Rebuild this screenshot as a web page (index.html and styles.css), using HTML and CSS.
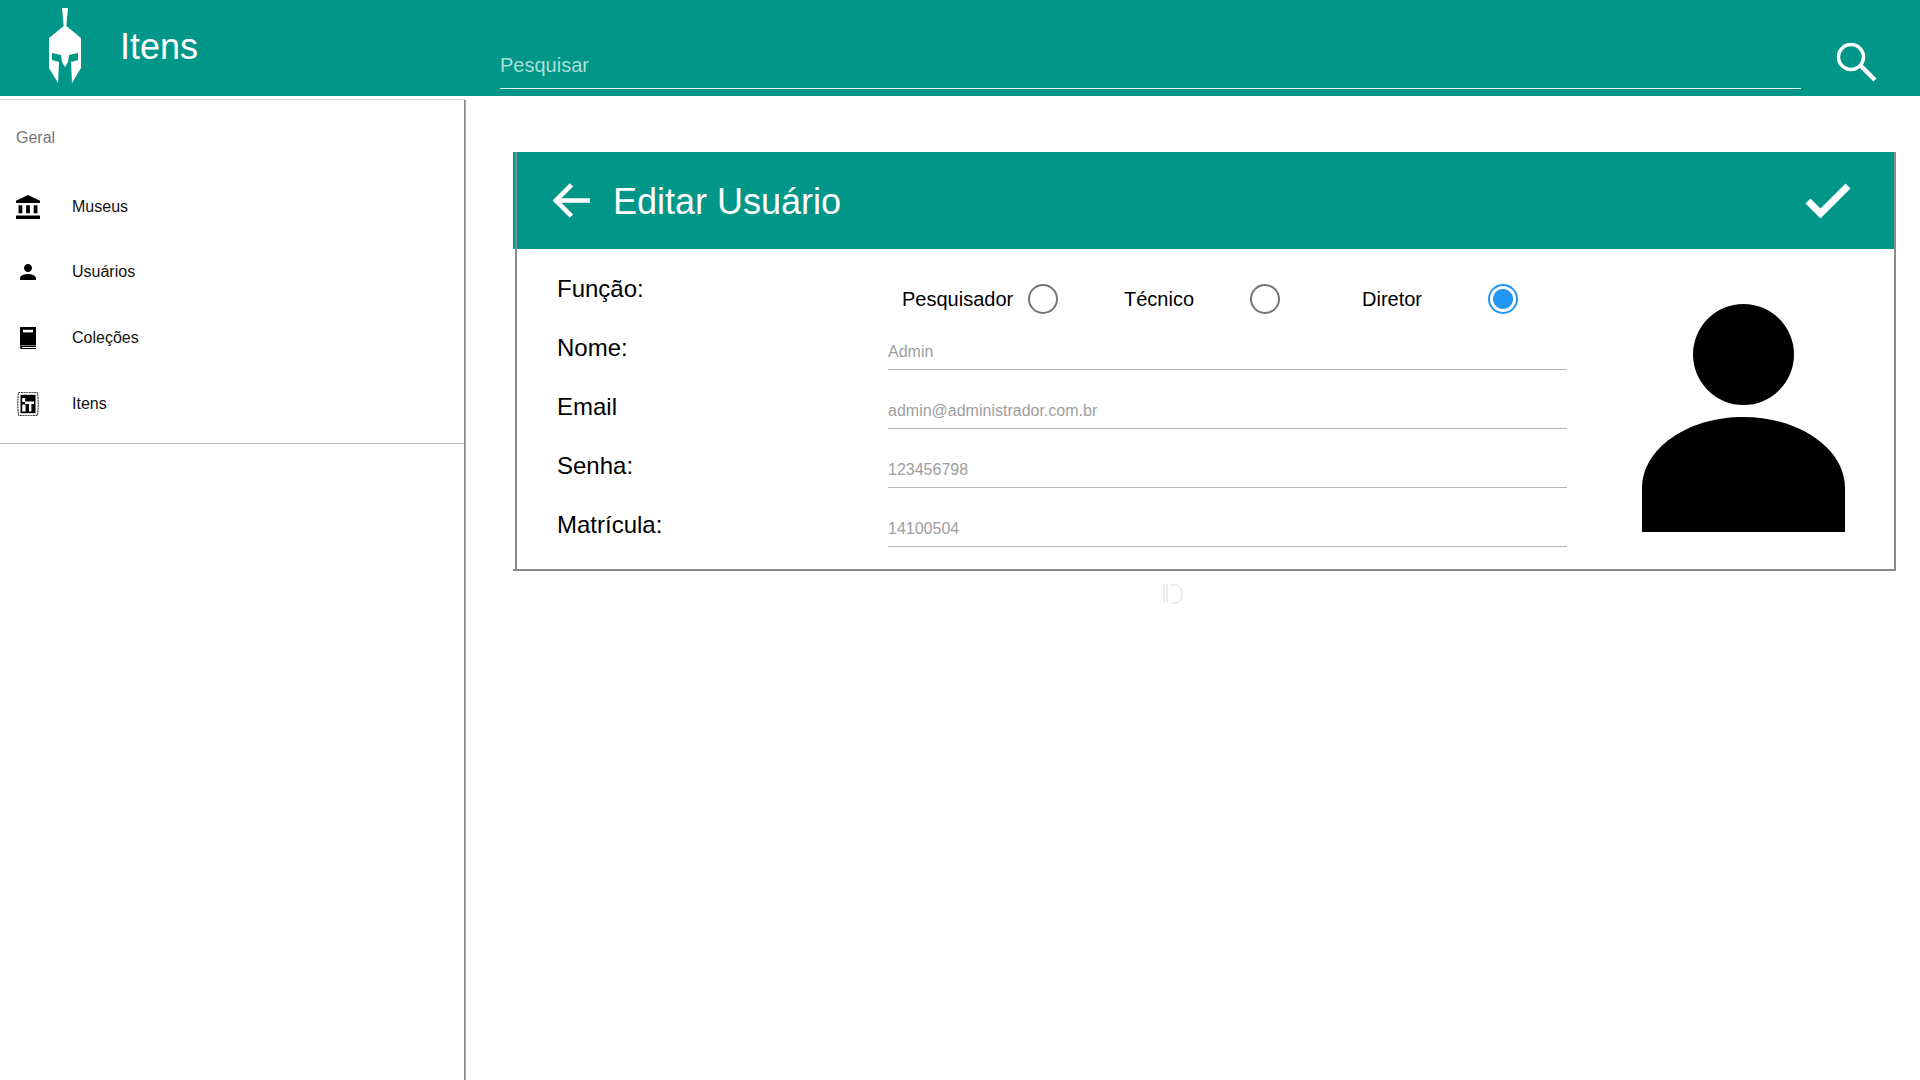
FILE: index.html
```html
<!DOCTYPE html>
<html lang="pt-BR">
<head>
    <meta charset="UTF-8">
    <meta name="viewport" content="width=device-width, initial-scale=1.0">
    <title>Itens</title>
    <link rel="stylesheet" href="styles.css">
</head>
<body>

    <header class="topbar">
        <svg class="logo" viewBox="0 0 50 96">
            <path fill="#fff" d="M22 8H28L26.3 26L41 38V68L32 83H18L9 68V38L23.7 26Z"/>
            <polygon fill="#009688" points="12,53 21,55 22,62 25,67 28,62 29,55 38,53 38,60 31,62 32,84 18,84 19,62 12,60"/>
        </svg>
        <h1 class="topbar-title">Itens</h1>
        <input class="search-input" type="text" placeholder="Pesquisar">
        <svg class="search-icon" viewBox="0 0 44 44">
            <circle cx="15" cy="21" r="12.5" fill="none" stroke="#fff" stroke-width="3.5"/>
            <path d="M24 30L39 45" transform="translate(0 -1)" fill="none" stroke="#fff" stroke-width="4.5"/>
        </svg>
    </header>

    <div class="content">
        <nav class="sidebar">
            <p class="sidebar-heading">Geral</p>
            <ul class="menu">
                <li class="menu-item">
                    <svg class="menu-icon" viewBox="2 1 19 21" preserveAspectRatio="none">
                        <path d="M4 10v7h3v-7H4zm6 0v7h3v-7h-3zM2 22h19v-3H2v3zm14-12v7h3v-7h-3zm-4.5-9L2 6v2h19V6l-9.5-5z"/>
                    </svg>
                    <span>Museus</span>
                </li>
                <li class="menu-item">
                    <svg class="menu-icon" viewBox="0 0 24 24">
                        <path d="M12 12c2.21 0 4-1.79 4-4s-1.79-4-4-4-4 1.79-4 4 1.79 4 4 4zm0 2c-2.67 0-8 1.34-8 4v2h16v-2c0-2.66-5.33-4-8-4z"/>
                    </svg>
                    <span>Usuários</span>
                </li>
                <li class="menu-item">
                    <svg class="menu-icon" viewBox="0 0 24 24">
                        <path d="M5 1H20V19.5H5.5C4.7 19.5 4 20 4 20.7V2C4 1.4 4.4 1 5 1Z"/>
                        <rect x="7" y="3.8" width="10" height="2.6" fill="#fff"/>
                        <path d="M4 20.8C4 20.2 4.6 20 5.5 20H20V21H6V22H20V23H5.5C4.6 23 4 22.4 4 21.6Z"/>
                    </svg>
                    <span>Coleções</span>
                </li>
                <li class="menu-item">
                    <svg class="menu-icon" viewBox="0 0 24 24">
                        <path d="M2.5 .7C7 .1 17 .1 21.5 .7C22.4 8 22.4 16 21.5 23.3C17 23.9 7 23.9 2.5 23.3C1.6 16 1.6 8 2.5 .7Z" fill="none" stroke="#222" stroke-width="1" stroke-dasharray="2 .6"/>
                        <rect x="4.5" y="2.8" width="15" height="18.4"/>
                        <rect x="6.2" y="6" width="3" height="4" fill="#fff"/>
                        <rect x="9" y="9.5" width="9" height="2.5" fill="#fff"/>
                        <rect x="6.2" y="12.5" width="3.4" height="7" fill="#fff"/>
                        <rect x="13" y="12" width="2.4" height="7.5" fill="#fff"/>
                    </svg>
                    <span>Itens</span>
                </li>
            </ul>
            <hr class="sidebar-divider">
        </nav>

        <main class="main">
            <section class="card">
                <div class="card-header">
                    <svg class="back-icon" viewBox="0 0 40 38">
                        <path d="M40 19H4M20 2L3 19L20 36" fill="none" stroke="#fff" stroke-width="5"/>
                    </svg>
                    <h2 class="card-title">Editar Usuário</h2>
                    <svg class="check-icon" viewBox="0 0 46 36">
                        <path d="M3 18L15.5 30.5L43 3" fill="none" stroke="#fff" stroke-width="7"/>
                    </svg>
                </div>
                <div class="card-body">
                    <form class="user-form">
                        <div class="form-row">
                            <label class="form-label">Função:</label>
                            <div class="role-options">
                                <div class="role-option">
                                    <span>Pesquisador</span>
                                    <span class="radio"></span>
                                </div>
                                <div class="role-option">
                                    <span>Técnico</span>
                                    <span class="radio"></span>
                                </div>
                                <div class="role-option role-option-last">
                                    <span>Diretor</span>
                                    <span class="radio radio-checked"></span>
                                </div>
                            </div>
                        </div>
                        <div class="form-row">
                            <label class="form-label">Nome:</label>
                            <input class="form-input" type="text" value="Admin">
                        </div>
                        <div class="form-row">
                            <label class="form-label">Email</label>
                            <input class="form-input" type="text" value="admin@administrador.com.br">
                        </div>
                        <div class="form-row">
                            <label class="form-label">Senha:</label>
                            <input class="form-input" type="text" value="123456798">
                        </div>
                        <div class="form-row">
                            <label class="form-label">Matrícula:</label>
                            <input class="form-input" type="text" value="14100504">
                        </div>
                    </form>
                    <svg class="avatar" viewBox="0 0 203 228">
                        <circle cx="101.5" cy="50.5" r="50.5"/>
                        <path d="M0 228V184C0 145 45 113 101.5 113S203 145 203 184V228Z"/>
                    </svg>
                </div>
            </section>
            <svg class="broken-mark" viewBox="0 0 20 20">
                <path d="M1 0V19M4 0V19M8 1H12C17 1 19 5 19 10S17 19 12 19H8" fill="none" stroke="#dcdcdc" stroke-width="1"/>
            </svg>
        </main>
    </div>

</body>
</html>
```

FILE: styles.css
```css
body {
    font-family: "Liberation Sans", Arial, sans-serif;
    background-color: #fff;
    color: #000;
    margin: 0;
    padding: 0;
}

/* Top bar */
.topbar {
    display: flex;
    align-items: flex-start;
    height: 96px;
    padding-left: 40px;
    background-color: #009688;
    color: #fff;
}

.logo {
    width: 50px;
    height: 96px;
    flex-shrink: 0;
}

.topbar-title {
    width: 380px;
    margin: 27px 0 0 30px;
    font-size: 36px;
    font-weight: normal;
    line-height: 40px;
}

.search-input {
    width: 1301px;
    height: 48px;
    margin-top: 41px;
    padding: 0;
    border: 0;
    border-bottom: 1px solid #d9efec;
    outline: none;
    background: transparent;
    color: #fff;
    font-family: inherit;
    font-size: 20px;
    box-sizing: border-box;
    line-height: 48px;
}

.search-input::placeholder {
    color: #aadfd9;
    opacity: 1;
}

.search-icon {
    width: 44px;
    height: 44px;
    margin: 36px 0 0 35px;
    overflow: visible;
}

/* Sidebar */
.content {
    display: flex;
    height: 984px;
}

.sidebar {
    width: 465px;
    margin-top: 4px;
    flex-shrink: 0;
    box-sizing: border-box;
    border-right: 1px solid #8a8a8a;
    box-shadow: 1px 0 1px rgba(0, 0, 0, 0.3), 0 -1px 1px rgba(0, 0, 0, 0.1);
}

.sidebar-heading {
    margin: 0;
    padding: 26px 0 24px 16px;
    font-size: 16px;
    line-height: 24px;
    color: #757575;
}

.menu {
    list-style: none;
    margin: 0;
    padding: 0 0 6px 0;
}

.menu-item {
    display: flex;
    align-items: center;
    height: 65.67px;
    padding-left: 16px;
    font-size: 16px;
    color: #111;
}

.menu-icon {
    width: 24px;
    height: 24px;
    margin-right: 32px;
    flex-shrink: 0;
}

.sidebar-divider {
    margin: 0;
    border: 0;
    border-top: 1px solid #bdbdbd;
}

/* Card */
.main {
    padding: 56px 0 0 48px;
}

.card {
    width: 1383px;
    box-sizing: border-box;
    border-right: 2px solid #8a8a8a;
    border-bottom: 2px solid #8a8a8a;
}

.card-header {
    display: flex;
    align-items: center;
    height: 97px;
    padding: 0 43px 0 38px;
    border-left: 2px solid #009688;
    box-shadow: inset 2px 0 #8a8a8a;
    background-color: #009688;
    color: #fff;
}

.back-icon {
    width: 37px;
    height: 35px;
}

.card-title {
    margin: 2px 0 0 23px;
    flex-grow: 1;
    font-size: 36px;
    font-weight: normal;
}

.check-icon {
    width: 46px;
    height: 36px;
}

.card-body {
    display: flex;
    align-items: flex-start;
    margin-left: 2px;
    padding: 3px 0 22px 40px;
    border-left: 2px solid #8a8a8a;
}

.user-form {
    width: 1010px;
}

.form-row {
    display: flex;
    height: 59px;
}

.form-label {
    width: 331px;
    flex-shrink: 0;
    margin-top: 23px;
    font-size: 24px;
    line-height: 28px;
}

.form-input {
    flex-grow: 1;
    height: 35px;
    margin-top: 24px;
    padding: 0;
    border: 0;
    border-bottom: 1px solid #b5b5b5;
    outline: none;
    box-sizing: border-box;
    color: #9e9e9e;
    font-family: inherit;
    font-size: 16px;
}

.role-options {
    display: flex;
    gap: 66px;
    margin: 32px 0 0 14px;
}

.role-option {
    display: flex;
    align-items: center;
    justify-content: space-between;
    width: 156px;
    height: 30px;
    font-size: 20px;
}

.role-option-last {
    margin-left: 16px;
}

.radio {
    width: 30px;
    height: 30px;
    box-sizing: border-box;
    border: 2px solid #757575;
    border-radius: 50%;
}

.radio-checked {
    border-color: #2196f3;
    background: radial-gradient(circle, #2196f3 0, #2196f3 9.5px, #fff 10.5px);
}

.avatar {
    width: 203px;
    height: 228px;
    margin: 52px 0 0 75px;
    flex-shrink: 0;
}

.broken-mark {
    display: block;
    width: 20px;
    height: 20px;
    margin: 13px 0 0 650px;
}
```
